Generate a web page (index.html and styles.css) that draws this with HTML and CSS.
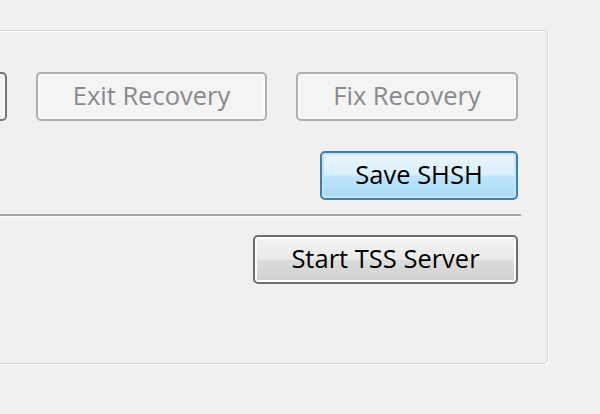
FILE: index.html
```html
<!DOCTYPE html>
<html>
<head>
<meta charset="utf-8">
<link rel="stylesheet" href="styles.css">
</head>
<body>
<div class="group">
  <div class="row row-top">
    <button class="btn btn-disabled btn-partial" disabled aria-label="Enter Recovery"></button>
    <button class="btn btn-disabled btn-exit" disabled>Exit Recovery</button>
    <button class="btn btn-disabled btn-fix" disabled>Fix Recovery</button>
  </div>
  <div class="row row-save">
    <button class="btn btn-default btn-save">Save SHSH</button>
  </div>
  <div class="separator"></div>
  <div class="row row-tss">
    <button class="btn btn-normal btn-tss">Start TSS Server</button>
  </div>
</div>
</body>
</html>
```

FILE: styles.css
```css
html, body {
  margin: 0;
  padding: 0;
  background: #f0f0f0;
  overflow: hidden;
  width: 600px;
  height: 414px;
}

.group {
  box-sizing: border-box;
  margin: 30px 0 0 -40px;
  width: 588px;
  height: 334px;
  border: 1px solid #cfdbe2;
  border-radius: 4px;
  box-shadow: inset 1px 1px 0 #ffffff, 1px 1px 0 #ffffff;
  padding: 41px 29px 0 0;
  display: flex;
  flex-direction: column;
}

.row {
  display: flex;
  justify-content: flex-end;
}

.row-top {
  gap: 29px;
}

.row-save {
  margin-top: 30px;
}

.separator {
  margin: 14px -3px 0 0;
  height: 0;
  border-top: 2px solid #a4a4a4;
  border-bottom: 1px solid #ffffff;
}

.row-tss {
  margin-top: 18px;
}

.btn {
  flex-shrink: 0;
  box-sizing: border-box;
  height: 49px;
  padding: 0 0 2px;
  border-radius: 5px;
  font-family: "Open Sans", "Noto Sans", sans-serif;
  font-size: 25.5px;
  line-height: 1;
  white-space: nowrap;
  overflow: hidden;
  display: flex;
  align-items: center;
  justify-content: center;
}

.btn-disabled {
  border: 2px solid #acb0b3;
  background: #f4f4f4;
  color: #878a8e;
  box-shadow: inset 0 0 0 2px #fbfbfb;
}

.btn-partial {
  width: 220px;
  border-color: #767676;
}

.btn-exit {
  width: 231px;
}

.btn-fix {
  width: 222px;
}

.btn-default {
  border: 2px solid #3c7fb1;
  color: #000;
  background: linear-gradient(to bottom, #eaf6fd 0%, #d9f0fc 48%, #bee6fd 52%, #a7d9f5 100%);
  box-shadow: inset 0 0 0 2px #c4e5f6;
}

.btn-save {
  width: 198px;
}

.btn-normal {
  border: 2px solid #6e6e6e;
  color: #000;
  background: linear-gradient(to bottom, #f2f2f2 0%, #ebebeb 48%, #dddddd 52%, #cfcfcf 100%);
  box-shadow: inset 0 0 0 2px #fcfcfc;
}

.btn-tss {
  width: 265px;
  height: 49px;
}
```
